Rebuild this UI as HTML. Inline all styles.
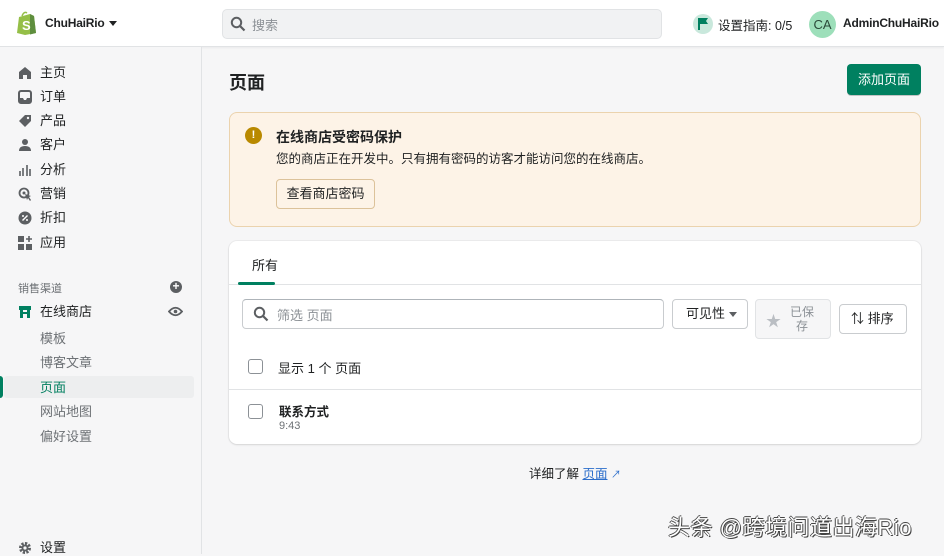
<!DOCTYPE html>
<html><head><meta charset="utf-8"><style>
*{box-sizing:border-box;margin:0;padding:0}
body{width:944px;height:554px;overflow:hidden;background:#f6f6f7;font-family:"Liberation Sans","Noto Sans CJK SC",sans-serif;color:#202223;position:relative;font-size:13px}
.a{position:absolute;white-space:nowrap}
.top{position:absolute;left:0;top:0;width:944px;height:47px;background:#fff;border-bottom:1px solid #e1e3e5;box-shadow:0 1px 2px rgba(0,0,0,.05)}
.side{position:absolute;left:0;top:47px;width:202px;height:507px;background:#f6f6f7;border-right:1px solid #e1e3e5}
.nav{position:absolute;left:40px;font-size:13px;color:#202223;line-height:16px}
.ic{position:absolute;left:18px;width:14px;height:14px}
.sub{position:absolute;left:40px;font-size:13px;color:#6d7175;line-height:16px}
.btn{position:absolute;background:#fff;border:1px solid #c9cccf;border-radius:4px;font-size:13px;text-align:center;color:#202223}
.cb{position:absolute;width:15px;height:15px;border:1.5px solid #8c9196;border-radius:3px;background:#fff}
</style></head><body>
<div class="top">
  <svg class="a" style="left:16px;top:11px" width="21" height="24" viewBox="0 0 21 24"><path d="M3 6 L14 3 L18 5 L20 22 L9 24 L1 22 Z" fill="#95bf47"/><path d="M14 3 L18 5 L20 22 L14 23.5Z" fill="#5e8e3e"/><path d="M6 5 Q8 0 11 2" stroke="#95bf47" stroke-width="1.5" fill="none"/><text x="6" y="19" font-size="13" font-weight="bold" fill="#fff" font-family="Liberation Sans">S</text></svg>
  <div class="a" style="left:45px;top:16px;font-size:12px;font-weight:bold;color:#202223;letter-spacing:-0.2px">ChuHaiRio</div>
  <div class="a" style="left:109px;top:21px;width:0;height:0;border-left:4px solid transparent;border-right:4px solid transparent;border-top:5px solid #202223"></div>
  <div class="a" style="left:222px;top:9px;width:440px;height:30px;background:#f1f2f3;border:1px solid #e1e3e5;border-radius:5px"></div>
  <svg class="a" style="left:230px;top:16px" width="16" height="16" viewBox="0 0 16 16"><circle cx="6.5" cy="6.5" r="4.7" stroke="#5c5f62" stroke-width="2" fill="none"/><path d="M10 10l4.5 4.5" stroke="#5c5f62" stroke-width="2.2"/></svg>
  <div class="a" style="left:252px;top:15px;color:#8c9196;font-size:13px">搜索</div>
  <div class="a" style="left:693px;top:14px;width:20px;height:20px;border-radius:50%;background:#c9e8dc"></div>
  <svg class="a" style="left:697px;top:17px" width="12" height="13" viewBox="0 0 12 13"><path d="M2 1v12" stroke="#007f5f" stroke-width="2"/><path d="M3 1h8l-2 3 2 3H3z" fill="#007f5f"/></svg>
  <div class="a" style="left:718px;top:15px;font-size:12.5px">设置指南: 0/5</div>
  <div class="a" style="left:809px;top:11px;width:27px;height:27px;border-radius:50%;background:#9ddfba;color:#2b4a3a;font-size:13px;text-align:center;line-height:27px">CA</div>
  <div class="a" style="left:843px;top:16px;font-size:12px;font-weight:bold;letter-spacing:-0.2px">AdminChuHaiRio</div>
</div>
<div class="side">
  <svg class="ic" style="top:19px" viewBox="0 0 14 14"><path d="M7 1L1 6v7h4V9h4v4h4V6z" fill="#5c5f62"/></svg>
  <div class="nav" style="top:18px">主页</div>
  <svg class="ic" style="top:43px" viewBox="0 0 14 14"><rect x="1" y="1" width="12" height="12" rx="2" stroke="#5c5f62" stroke-width="2" fill="none"/><path d="M1 8h4l1 2h2l1-2h4v5H1z" fill="#5c5f62"/></svg>
  <div class="nav" style="top:42px">订单</div>
  <svg class="ic" style="top:67px" viewBox="0 0 14 14"><path d="M7 1h6v6l-6 6-6-6z" fill="#5c5f62"/><circle cx="10" cy="4" r="1.2" fill="#f6f6f7"/></svg>
  <div class="nav" style="top:66px">产品</div>
  <svg class="ic" style="top:91px" viewBox="0 0 14 14"><circle cx="7" cy="4" r="3" fill="#5c5f62"/><path d="M1 13q0-5 6-5t6 5z" fill="#5c5f62"/></svg>
  <div class="nav" style="top:90px">客户</div>
  <svg class="ic" style="top:116px" viewBox="0 0 14 14"><path d="M2 8v5M5 5v8M9 2v11M12 6v7" stroke="#5c5f62" stroke-width="1.6"/></svg>
  <div class="nav" style="top:115px">分析</div>
  <svg class="ic" style="top:140px" viewBox="0 0 14 14"><circle cx="6" cy="6" r="4.5" stroke="#5c5f62" stroke-width="1.8" fill="none"/><circle cx="6" cy="6" r="1.5" fill="#5c5f62"/><path d="M7 7l6 2-2 1 2 3-1 1-2-3-1 2z" fill="#5c5f62"/></svg>
  <div class="nav" style="top:139px">营销</div>
  <svg class="ic" style="top:164px" viewBox="0 0 14 14"><circle cx="7" cy="7" r="6.5" fill="#5c5f62"/><path d="M4.5 9.5l5-5" stroke="#fff" stroke-width="1.4"/><circle cx="5" cy="5" r="1" fill="#fff"/><circle cx="9" cy="9" r="1" fill="#fff"/></svg>
  <div class="nav" style="top:163px">折扣</div>
  <svg class="ic" style="top:189px" viewBox="0 0 14 14"><rect x="0" y="0" width="6" height="6" fill="#5c5f62"/><rect x="0" y="8" width="6" height="6" fill="#5c5f62"/><rect x="8" y="8" width="6" height="6" fill="#5c5f62"/><path d="M11 0v6M8 3h6" stroke="#5c5f62" stroke-width="1.6"/></svg>
  <div class="nav" style="top:188px">应用</div>
  <div class="a" style="left:18px;top:233px;font-size:11px;color:#6d7175">销售渠道</div>
  <div class="a" style="left:170px;top:234px;width:12px;height:12px;border-radius:50%;background:#5c5f62;color:#fff;font-size:12px;line-height:11px;text-align:center;font-weight:bold">+</div>
  <svg class="ic" style="top:258px" viewBox="0 0 14 14"><path d="M1 1h12v4H1z" fill="#008060"/><path d="M2 5h3v8H2zM9 5h3v8H9zM5 7h4v2H5z" fill="#008060"/></svg>
  <div class="nav" style="top:257px">在线商店</div>
  <svg class="a" style="left:168px;top:259px" width="15" height="11" viewBox="0 0 15 11"><path d="M1 5.5Q7.5-2 14 5.5Q7.5 13 1 5.5z" stroke="#5c5f62" stroke-width="1.8" fill="none"/><circle cx="7.5" cy="5.5" r="1.8" fill="#5c5f62"/></svg>
  <div class="sub" style="top:284px">模板</div>
  <div class="sub" style="top:308px">博客文章</div>
  <div class="a" style="left:4px;top:329px;width:190px;height:22px;background:#edeeef;border-radius:3px"></div>
  <div class="a" style="left:0;top:329px;width:3px;height:22px;background:#008060;border-radius:0 3px 3px 0"></div>
  <div class="sub" style="top:333px;color:#007f5f">页面</div>
  <div class="sub" style="top:357px">网站地图</div>
  <div class="sub" style="top:382px">偏好设置</div>
  <svg class="ic" style="top:494px" viewBox="0 0 14 14"><circle cx="7" cy="7" r="4.5" stroke="#5c5f62" stroke-width="3" fill="none" stroke-dasharray="2.2 1.3"/><circle cx="7" cy="7" r="3.5" fill="#5c5f62"/><circle cx="7" cy="7" r="1.6" fill="#f6f6f7"/></svg>
  <div class="nav" style="top:493px">设置</div>
</div>
<div class="a" style="left:229px;top:69px;font-size:18px;font-weight:bold">页面</div>
<div class="a" style="left:847px;top:64px;width:74px;height:31px;background:#008060;border-radius:4px;color:#fff;font-size:13px;text-align:center;line-height:31px;box-shadow:0 1px 0 rgba(0,0,0,.2)">添加页面</div>
<div class="a" style="left:229px;top:112px;width:692px;height:115px;background:#fdf3e7;border:1px solid #ebd3ae;border-radius:8px"></div>
<div class="a" style="left:245px;top:127px;width:17px;height:17px;border-radius:50%;background:#b98900;color:#fff;font-size:11px;font-weight:bold;text-align:center;line-height:17px">!</div>
<div class="a" style="left:276px;top:127px;font-size:14px;font-weight:bold">在线商店受密码保护</div>
<div class="a" style="left:276px;top:148px;font-size:12.5px">您的商店正在开发中。只有拥有密码的访客才能访问您的在线商店。</div>
<div class="btn" style="left:276px;top:179px;width:99px;height:30px;line-height:28px;background:#fdf3e7;border-color:#dcc29a">查看商店密码</div>
<div class="a" style="left:229px;top:241px;width:692px;height:203px;background:#fff;border-radius:8px;box-shadow:0 0 0 1px rgba(0,0,0,.04),0 1px 2px rgba(0,0,0,.1)"></div>
<div class="a" style="left:252px;top:255px;font-size:13px">所有</div>
<div class="a" style="left:229px;top:284px;width:692px;height:1px;background:#e1e3e5"></div>
<div class="a" style="left:238px;top:282px;width:37px;height:3px;background:#008060;border-radius:2px"></div>
<div class="a" style="left:242px;top:299px;width:422px;height:30px;border:1px solid #c9cccf;border-top-color:#aeb4b9;border-radius:4px;background:#fff"></div>
<svg class="a" style="left:253px;top:306px" width="16" height="16" viewBox="0 0 16 16"><circle cx="6.5" cy="6.5" r="4.7" stroke="#5c5f62" stroke-width="2" fill="none"/><path d="M10 10l4.5 4.5" stroke="#5c5f62" stroke-width="2.2"/></svg>
<div class="a" style="left:277px;top:305px;color:#8c9196;font-size:13px">筛选 页面</div>
<div class="btn" style="left:672px;top:299px;width:76px;height:30px;line-height:28px;text-align:left;padding-left:13px">可见性</div>
<div class="a" style="left:729px;top:312px;border-left:4px solid transparent;border-right:4px solid transparent;border-top:5px solid #5c5f62"></div>
<div class="a" style="left:755px;top:299px;width:76px;height:40px;background:#f6f6f7;border:1px solid #e1e3e5;border-radius:4px"></div>
<div class="a" style="left:766px;top:310px;font-size:15px;color:#babec3">★</div>
<div class="a" style="left:790px;top:305px;font-size:12px;color:#8c9196;text-align:center;line-height:14px">已保<br>存</div>
<div class="btn" style="left:839px;top:304px;width:68px;height:30px;line-height:28px;text-align:left;padding-left:11px">⇅ 排序</div>
<div class="cb" style="left:248px;top:359px"></div>
<div class="a" style="left:278px;top:358px;font-size:13px">显示 1 个 页面</div>
<div class="a" style="left:229px;top:389px;width:692px;height:1px;background:#e1e3e5"></div>
<div class="cb" style="left:248px;top:404px"></div>
<div class="a" style="left:279px;top:401px;font-size:12.5px;font-weight:bold">联系方式</div>
<div class="a" style="left:279px;top:420px;font-size:11px;color:#6d7175">9:43</div>
<div class="a" style="left:529px;top:463px;font-size:12.5px">详细了解 <span style="color:#2c6ecb;text-decoration:underline">页面</span> <span style="color:#2c6ecb;font-size:10px">↗</span></div>
<div class="a" style="left:668px;top:510px;font-size:22px;color:#fff;letter-spacing:0.5px;text-shadow:1px 1px 0 #444,-1px 0 0 #444,0 -1px 0 #444">头条 @跨境问道出海Rio</div>
</body></html>
